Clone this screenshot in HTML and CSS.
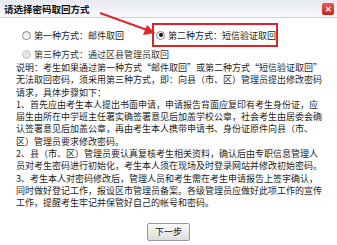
FILE: index.html
```html
<!DOCTYPE html>
<html lang="zh-CN">

<head>
    <meta charset="UTF-8">
    <title>请选择密码取回方式</title>
    <link rel="stylesheet" href="styles.css">
</head>

<body>
    <div class="dialog">
        <div class="title-bar">
            <span class="title">请选择密码取回方式</span>
            <span class="close-btn">&#x2715;</span>
        </div>

        <div class="dialog-body">
            <div class="option-row">
                <label class="option first">
                    <span class="radio"></span>
                    第一种方式：邮件取回
                </label>
                <label class="option picked">
                    <span class="radio checked"></span>
                    第二种方式：短信验证取回
                </label>
            </div>
            <div class="option-row second">
                <label class="option muted">
                    <span class="radio disabled"></span>
                    第三种方式：通过区县管理员取回
                </label>
            </div>

            <p class="notes">
                说明：考生如果通过第一种方式“邮件取回”或第二种方式“短信验证取回”<br>
                无法取回密码，须采用第三种方式，即：向县（市、区）管理员提出修改密码<br>
                请求，具体步骤如下：<br>
                1、首先应由考生本人提出书面申请，申请报告背面应复印有考生身份证，应<br>
                届生由所在中学班主任署实确签署意见后加盖学校公章，社会考生由居委会确<br>
                认签署意见后加盖公章，再由考生本人携带申请书、身份证原件向县（市、<br>
                区）管理员要求修改密码。<br>
                2、县（市、区）管理员要认真复核考生相关资料，确认后由专职信息管理人<br>
                员对考生密码进行初始化，考生本人须在现场及时登录网站并修改初始密码。<br>
                3、考生本人对密码修改后，管理人员和考生需在考生申请报告上签字确认，<br>
                同时做好登记工作，报设区市管理员备案。各级管理员应做好此项工作的宣传<br>
                工作，提醒考生牢记并保管好自己的帐号和密码。
            </p>

            <div class="actions">
                <button class="next-btn">下一步</button>
            </div>
        </div>

        <!-- annotation arrow pointing at the chosen option -->
        <svg class="pointer" width="70" height="30" viewBox="0 0 70 30">
            <line x1="2" y1="2" x2="52" y2="20" stroke="#e0262b" stroke-width="2" />
            <polygon points="57,22 45,24 49,14" fill="#e0262b" />
        </svg>
    </div>
</body>

</html>
```

FILE: styles.css
```css
* {
    margin: 0;
    padding: 0;
    box-sizing: border-box;
}

body {
    font-family: "Noto Sans CJK SC", "Liberation Sans", sans-serif;
    background: #fff;
    color: #222;
}

.dialog {
    position: relative;
    width: 337px;
    height: 245px;
    background: #fff;
}

.title-bar {
    height: 18px;
    display: flex;
    align-items: center;
    justify-content: space-between;
    padding: 0 3px 0 4px;
    background: linear-gradient(#e7eaef, #f8f9fb);
    border-bottom: 1px solid #d0d3d8;
}

.title {
    font-size: 9.5px;
    font-weight: bold;
    color: #111;
}

.close-btn {
    width: 12px;
    height: 12px;
    display: flex;
    align-items: center;
    justify-content: center;
    background: linear-gradient(#ec5a4f, #c8201b);
    border-radius: 2px;
    color: #fff;
    font-size: 8px;
    font-weight: bold;
    line-height: 1;
}

.dialog-body {
    padding: 5px 0 0 16px;
}

.option-row {
    display: flex;
    align-items: center;
    height: 24px;
}

.option-row.second {
    height: 13px;
    margin-top: 1px;
}

.option {
    display: flex;
    align-items: center;
    gap: 3px;
    margin-left: 6px;
    font-size: 9px;
    white-space: nowrap;
}

.option.first {
    width: 130px;
}

.option.picked {
    height: 24px;
    width: 126px;
    margin-left: 0;
    padding-left: 2px;
    border: 2px solid #d9262b;
}

.option.muted {
    color: #333;
}

.radio {
    flex-shrink: 0;
    width: 9px;
    height: 9px;
    border-radius: 50%;
    border: 1px solid #8a8a8a;
    background: linear-gradient(#e6e6e6, #fff);
    display: flex;
    align-items: center;
    justify-content: center;
}

.radio.checked::after {
    content: "";
    width: 4px;
    height: 4px;
    border-radius: 50%;
    background: #111;
}

.radio.disabled {
    border-color: #c4c4c4;
    background: #e4e4e4;
}

.notes {
    margin-top: 1px;
    font-size: 9px;
    line-height: 12.3px;
    white-space: nowrap;
    color: #1e1e1e;
}

.actions {
    display: flex;
    justify-content: center;
    padding-right: 16px;
    margin-top: 13px;
}

.next-btn {
    width: 43px;
    height: 18px;
    font-family: inherit;
    font-size: 9px;
    color: #222;
    background: linear-gradient(#fafafa, #dcdcdc);
    border: 1px solid #9a9a9a;
    border-radius: 2px;
}

.pointer {
    position: absolute;
    left: 98px;
    top: 11px;
}
```
